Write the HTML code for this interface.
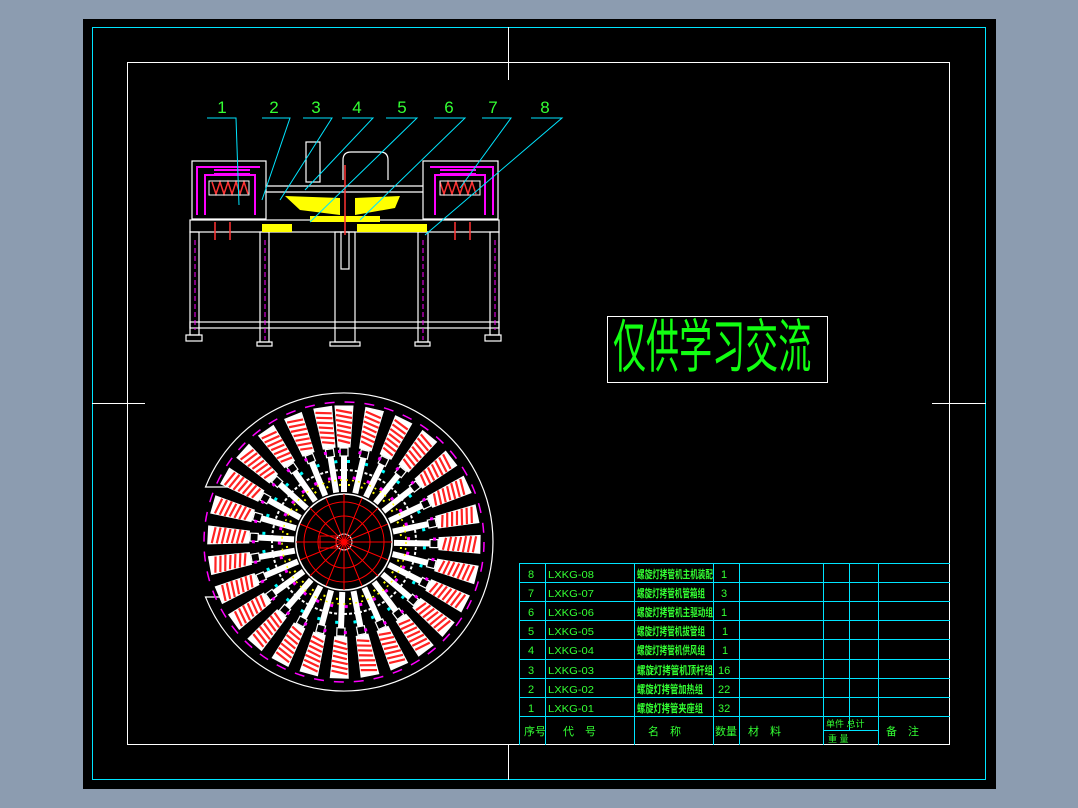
<!DOCTYPE html>
<html><head><meta charset="utf-8"><style>
html,body{margin:0;padding:0;background:#8c9cb0;width:1078px;height:808px;overflow:hidden}
svg{position:absolute;left:0;top:0}
text{font-family:"Liberation Sans","Noto Sans CJK SC",sans-serif}
</style></head><body>
<svg width="1078" height="808" viewBox="0 0 1078 808">
<defs>
<g id="coil">
 <polygon points="-6,-95 6,-95 9,-136 -9,-136" fill="#fff" stroke="#fff" stroke-width="1"/>
 <path d="M-8,-132 L8,-129 M-8,-127 L8,-124 M-8,-122 L8,-119 M-7,-117 L7,-114 M-7,-112 L7,-109 M-7,-107 L7,-104 M-6,-102 L6,-99" stroke="#f22" stroke-width="2.2"/>
 <rect x="-4" y="-94" width="8" height="8" fill="none" stroke="#fff" stroke-width="1.2"/>
 <rect x="-3" y="-86" width="6" height="36" fill="#fff"/>
 <rect x="-6" y="-92" width="3" height="3" fill="#f0f"/>
 <rect x="3" y="-82" width="3" height="3" fill="#0ff"/>
 <rect x="-6" y="-66" width="3" height="3" fill="#f0f"/>
 <rect x="4" y="-58" width="2" height="2" fill="#ff0"/>
</g>
</defs>
<rect x="83" y="19" width="913" height="770" fill="#000"/>
<rect x="92.5" y="27.5" width="893" height="752" fill="none" stroke="#00e5ff" stroke-width="1"/>
<rect x="127.5" y="62.5" width="822" height="682" fill="none" stroke="#fff" stroke-width="1"/>
<g stroke="#fff" stroke-width="1">
<line x1="508.5" y1="27" x2="508.5" y2="80"/><line x1="508.5" y1="745" x2="508.5" y2="780"/>
<line x1="92" y1="403.5" x2="145" y2="403.5"/><line x1="932" y1="403.5" x2="986" y2="403.5"/>
</g>

<g fill="none" stroke="#fff" stroke-width="1.2">
<rect x="190" y="220" width="309" height="12"/>
<rect x="192" y="161" width="74" height="58"/>
<rect x="423" y="161" width="75" height="58"/>
<rect x="190" y="232" width="9" height="103"/>
<rect x="490" y="232" width="9" height="103"/>
<rect x="260" y="232" width="9" height="110"/>
<rect x="418" y="232" width="10" height="110"/>
<rect x="335" y="232" width="20" height="110"/>
<rect x="341" y="232" width="8" height="37"/>
<rect x="190" y="322" width="309" height="6"/>
<rect x="306" y="142" width="14" height="40"/>
<rect x="186" y="335" width="16" height="6"/><rect x="485" y="335" width="16" height="6"/>
<rect x="257" y="342" width="15" height="4"/><rect x="415" y="342" width="15" height="4"/><rect x="330" y="342" width="30" height="4"/>
<path d="M343,180 V160 Q343,152 351,152 H380 Q388,152 388,160 V180"/>
<path d="M266,186 H423 M266,192 H423"/>
</g>
<g fill="#ff0">
<rect x="262" y="224" width="30" height="8"/><rect x="357" y="224" width="70" height="8"/>
<polygon points="285,196 340,198 340,215 300,210"/><polygon points="355,198 400,196 395,208 355,215"/>
<rect x="310" y="216" width="70" height="6"/>
</g>
<g stroke="#f0f" stroke-width="2" fill="none">
<path d="M197,215 V167 H260 M205,215 V175 H255 V215"/>
<path d="M493,215 V167 H430 M485,215 V175 H435 V215"/>
<path d="M214,170 H250 M214,174 H250 M440,170 H476 M440,174 H476"/>
<path d="M195,240 V330 M495,240 V330 M265,240 V340 M423,240 V340" stroke-width="1" stroke-dasharray="5,3"/>
</g>
<g fill="none" stroke="#f33" stroke-width="1.5">
<path d="M212,182 l4,12 l4,-12 l4,12 l4,-12 l4,12 l4,-12 l4,12 l4,-12 l4,12"/>
<path d="M440,182 l4,12 l4,-12 l4,12 l4,-12 l4,12 l4,-12 l4,12 l4,-12 l4,12"/>
<path d="M345,165 V235 M215,222 V240 M230,222 V240 M455,222 V240 M470,222 V240"/>
</g>
<rect x="209" y="181" width="40" height="14" fill="none" stroke="#fff"/>
<rect x="440" y="181" width="40" height="14" fill="none" stroke="#fff"/>
<g stroke="#00e5ff" stroke-width="1" fill="none">
<path d="M207,118 H236 L239,205"/><path d="M262,118 H290 L262,200"/><path d="M303,118 H332 L280,200"/>
<path d="M342,118 H373 L305,190"/><path d="M386,118 H417 L310,222"/><path d="M434,118 H465 L360,220"/>
<path d="M482,118 H511 L460,188"/><path d="M531,118 H562 L425,235"/>
</g>
<g fill="#3f3" font-size="17" text-anchor="middle">
<text x="222" y="113">1</text><text x="274" y="113">2</text><text x="316" y="113">3</text><text x="357" y="113">4</text>
<text x="402" y="113">5</text><text x="449" y="113">6</text><text x="493" y="113">7</text><text x="545" y="113">8</text>
</g>

<rect x="607.5" y="316.5" width="220" height="66" fill="none" stroke="#fff"/>
<text x="0" y="0" transform="translate(613,367) scale(0.57,1)" font-size="58" fill="#1f1">仅供学习交流</text>

<g transform="translate(344,542)">
<path d="M-114,-55 H-138.5 A149,149 0 1 1 -138.5,55 H-114" fill="none" stroke="#fff" stroke-width="1.2"/>
<circle r="140" fill="none" stroke="#f0f" stroke-width="1.5" stroke-dasharray="10,10"/>
<g>
<use href="#coil" transform="rotate(0)"/><use href="#coil" transform="rotate(13)"/><use href="#coil" transform="rotate(26)"/><use href="#coil" transform="rotate(39)"/><use href="#coil" transform="rotate(52)"/><use href="#coil" transform="rotate(65)"/><use href="#coil" transform="rotate(78)"/><use href="#coil" transform="rotate(91)"/><use href="#coil" transform="rotate(104)"/><use href="#coil" transform="rotate(117)"/><use href="#coil" transform="rotate(130)"/><use href="#coil" transform="rotate(143)"/><use href="#coil" transform="rotate(156)"/><use href="#coil" transform="rotate(169)"/><use href="#coil" transform="rotate(182)"/><use href="#coil" transform="rotate(195)"/><use href="#coil" transform="rotate(208)"/><use href="#coil" transform="rotate(221)"/><use href="#coil" transform="rotate(234)"/><use href="#coil" transform="rotate(247)"/><use href="#coil" transform="rotate(260)"/><use href="#coil" transform="rotate(273)"/><use href="#coil" transform="rotate(286)"/><use href="#coil" transform="rotate(299)"/><use href="#coil" transform="rotate(312)"/><use href="#coil" transform="rotate(325)"/><use href="#coil" transform="rotate(338)"/><use href="#coil" transform="rotate(351)"/>
</g>
<circle r="72" fill="none" stroke="#fff" stroke-width="2" stroke-dasharray="3,2"/>
<circle r="62" fill="none" stroke="#ff0" stroke-width="1.5" stroke-dasharray="2,4"/>
<circle r="48" fill="#000" stroke="#fff" stroke-width="1.5"/>
<circle r="40" fill="none" stroke="#f00" stroke-width="1"/>
<circle r="26" fill="none" stroke="#f00" stroke-width="1"/>
<circle r="8" fill="none" stroke="#fff"/>
<circle r="3" fill="#f00"/>
<g stroke="#f00" stroke-width="1">
<path d="M-48,0 H48 M0,-48 V48 M-34,-34 L34,34 M-34,34 L34,-34 M-18,-44 L18,44 M18,-44 L-18,44 M-44,-18 L44,18 M-44,18 L44,-18"/>
</g>
<rect x="-24" y="-6" width="16" height="12" fill="none" stroke="#f00"/>
</g>

<g stroke="#00e5ff" stroke-width="1" fill="none">
<path d="M519.5,563.5 H950 M519.5,582.5 H950 M519.5,601.5 H950 M519.5,620.5 H950 M519.5,639.5 H950 M519.5,659.5 H950 M519.5,678.5 H950 M519.5,697.5 H950 M519.5,716.5 H950 M823,730.5 H878"/>
<path d="M519.5,563 V745 M545.5,563 V745 M634.5,563 V745 M713.5,563 V745 M739.5,563 V745 M823.5,563 V745 M849.5,563 V730 M878.5,563 V745"/>
</g>
<g fill="#3f3" font-size="11">
<g text-anchor="middle">
<text x="531" y="578">8</text><text x="531" y="597">7</text><text x="531" y="616">6</text><text x="531" y="635">5</text><text x="531" y="654">4</text><text x="531" y="674">3</text><text x="531" y="693">2</text><text x="531" y="712">1</text>
</g>
<g font-size="10">
<text x="548" y="578" textLength="46" lengthAdjust="spacingAndGlyphs">LXKG-08</text><text x="548" y="597" textLength="46" lengthAdjust="spacingAndGlyphs">LXKG-07</text><text x="548" y="616" textLength="46" lengthAdjust="spacingAndGlyphs">LXKG-06</text><text x="548" y="635" textLength="46" lengthAdjust="spacingAndGlyphs">LXKG-05</text><text x="548" y="654" textLength="46" lengthAdjust="spacingAndGlyphs">LXKG-04</text><text x="548" y="674" textLength="46" lengthAdjust="spacingAndGlyphs">LXKG-03</text><text x="548" y="693" textLength="46" lengthAdjust="spacingAndGlyphs">LXKG-02</text><text x="548" y="712" textLength="46" lengthAdjust="spacingAndGlyphs">LXKG-01</text>
</g>
<g font-weight="bold" font-size="11">
<text x="637" y="578" textLength="76" lengthAdjust="spacingAndGlyphs">螺旋灯拷管机主机装配</text><text x="637" y="597" textLength="68" lengthAdjust="spacingAndGlyphs">螺旋灯拷管机管箱组</text><text x="637" y="616" textLength="76" lengthAdjust="spacingAndGlyphs">螺旋灯拷管机主驱动组</text><text x="637" y="635" textLength="68" lengthAdjust="spacingAndGlyphs">螺旋灯拷管机拔管组</text><text x="637" y="654" textLength="68" lengthAdjust="spacingAndGlyphs">螺旋灯拷管机供风组</text><text x="637" y="674" textLength="76" lengthAdjust="spacingAndGlyphs">螺旋灯拷管机顶杆组</text><text x="637" y="693" textLength="66" lengthAdjust="spacingAndGlyphs">螺旋灯拷管加热组</text><text x="637" y="712" textLength="66" lengthAdjust="spacingAndGlyphs">螺旋灯拷管夹座组</text>
</g>
<text x="721" y="578">1</text><text x="721" y="597">3</text><text x="721" y="616">1</text><text x="722" y="635">1</text><text x="722" y="654">1</text><text x="718" y="674">16</text><text x="718" y="693">22</text><text x="718" y="712">32</text>
<text x="524" y="735">序号</text><text x="563" y="735">代　号</text><text x="648" y="735">名　称</text><text x="715" y="735">数量</text><text x="748" y="735">材　料</text>
<text x="826" y="727" font-size="9">单件 总计</text><text x="828" y="742" font-size="9">重 量</text><text x="886" y="735">备　注</text>
</g>
</svg>
</body></html>
